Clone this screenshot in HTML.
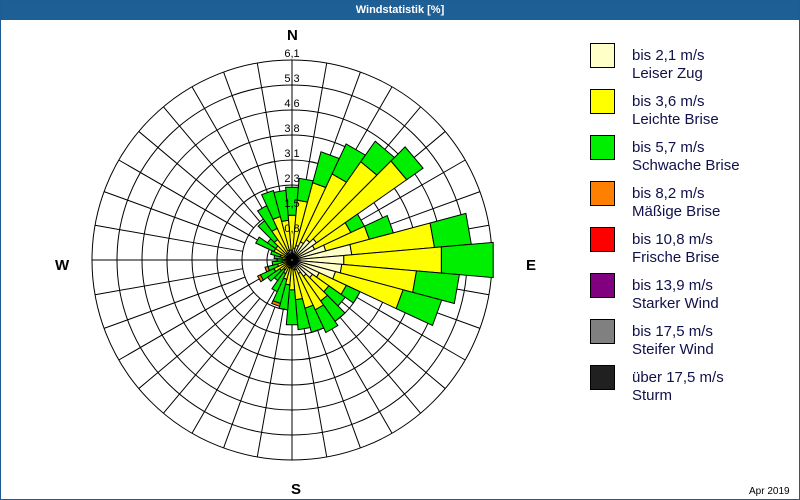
<!DOCTYPE html>
<html><head><meta charset="utf-8"><style>
html,body{margin:0;padding:0;background:#fff;}
#w{position:relative;width:798px;height:498px;border:1px solid #1e5c94;overflow:hidden;font-family:"Liberation Sans",sans-serif;}
#t{position:absolute;left:0;top:0;width:798px;height:19px;background:#1e5f96;color:#fff;font-weight:bold;font-size:11px;text-align:center;line-height:19px;}
.lg{position:absolute;left:589px;width:23px;height:23px;border:1px solid #000;}
.lt{position:absolute;left:631px;font-size:15px;line-height:18px;color:#10104a;}
.c{position:absolute;font-weight:bold;font-size:15px;color:#000;}
</style></head><body><div id="w">
<div id="t">Windstatistik [%]</div>
<svg id="s" width="798" height="498" style="position:absolute;left:0;top:0"></svg>
<div class="c" style="left:286px;top:26px">N</div>
<div class="c" style="left:525px;top:256px">E</div>
<div class="c" style="left:290px;top:480px">S</div>
<div class="c" style="left:54px;top:256px">W</div>
<div class="lg" style="top:42px;background:#ffffc8"></div><div class="lt" style="top:46px">bis 2,1 m/s<br>Leiser Zug</div>
<div class="lg" style="top:88px;background:#ffff00"></div><div class="lt" style="top:92px">bis 3,6 m/s<br>Leichte Brise</div>
<div class="lg" style="top:134px;background:#00ee00"></div><div class="lt" style="top:138px">bis 5,7 m/s<br>Schwache Brise</div>
<div class="lg" style="top:180px;background:#ff8000"></div><div class="lt" style="top:184px">bis 8,2 m/s<br>Mäßige Brise</div>
<div class="lg" style="top:226px;background:#ff0000"></div><div class="lt" style="top:230px">bis 10,8 m/s<br>Frische Brise</div>
<div class="lg" style="top:272px;background:#800080"></div><div class="lt" style="top:276px">bis 13,9 m/s<br>Starker Wind</div>
<div class="lg" style="top:318px;background:#808080"></div><div class="lt" style="top:322px">bis 17,5 m/s<br>Steifer Wind</div>
<div class="lg" style="top:364px;background:#202020"></div><div class="lt" style="top:368px">über 17,5 m/s<br>Sturm</div>
<div style="position:absolute;left:748px;top:485px;font-size:10px;color:#000">Apr 2019</div>
</div>
<script>
var cx=291,cy=259,h='';
for(var k=1;k<=8;k++)h+='<circle cx="'+cx+'" cy="'+cy+'" r="'+(25*k)+'" fill="none" stroke="#000" stroke-width="1"/>';
for(var a=0;a<360;a+=10){var r=a*Math.PI/180,s=Math.sin(r),c=Math.cos(r);var r0=(a%30==0)?20:50;h+='<line x1="'+(cx+r0*s)+'" y1="'+(cy-r0*c)+'" x2="'+(cx+200*s)+'" y2="'+(cy-200*c)+'" stroke="#000"/>';}
h+='<line x1="'+cx+'" y1="'+(cy-200)+'" x2="'+cx+'" y2="'+(cy+200)+'" stroke="#000"/><line x1="'+(cx-200)+'" y1="'+cy+'" x2="'+(cx+200)+'" y2="'+cy+'" stroke="#000"/>';
var d=[[10,45,73],[12,60,82],[15,80,112],[20,95,128],[25,120,145],[30,140,160],[25,65,80],[35,80,105],[60,143,180],[52,150,202],[50,125,168],[45,115,155],[30,60,75],[25,45,65],[20,50,75],[15,55,80],[10,50,75],[10,40,70],[8,30,65],[8,25,50],[8,20,45],[5,15,35],[5,12,25],[5,15,30],[5,20,35],[5,15,25],[5,10,20],[5,8,15],[5,10,18],[5,12,22],[6,20,40],[6,20,30],[8,25,48],[8,35,60],[10,45,72],[10,40,70]];
var col=['#ffffc8','#ffff00','#00ee00'];
function seg(a,r0,r1,f){var a0=(a-5)*Math.PI/180,a1=(a+5)*Math.PI/180;function p(r,t){return (cx+r*Math.sin(t)).toFixed(1)+','+(cy-r*Math.cos(t)).toFixed(1);}
return '<path d="M'+p(r0,a0)+' L'+p(r1,a0)+' L'+p(r1,a1)+' L'+p(r0,a1)+'Z" fill="'+f+'" stroke="#000" stroke-width="1"/>';}
for(var i=0;i<36;i++){var prev=2;for(var j=0;j<3;j++){h+=seg(i*10,prev,d[i][j],col[j]);prev=d[i][j];}}
h+=seg(200,45,48,'#ff8000')+seg(240,35,38,'#ff8000')+seg(250,25,28,'#ff8000');
var lb=['0,8','1,5','2,3','3,1','3,8','4,6','5,3','6,1'];
for(var k=0;k<8;k++)h+='<text x="'+cx+'" y="'+(cy-25*(k+1)-3)+'" font-family="Liberation Sans,sans-serif" font-size="11" text-anchor="middle" fill="#000">'+lb[k]+'</text>';
document.getElementById('s').innerHTML=h;
</script>
</body></html>
